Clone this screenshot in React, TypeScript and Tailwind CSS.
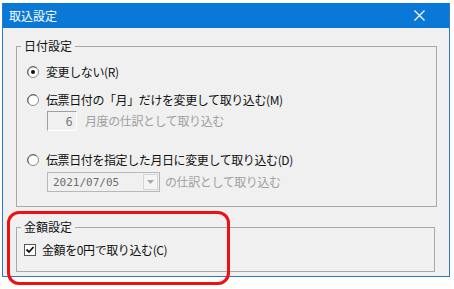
import React from "react";

const font = { fontFamily: '"Noto Sans CJK JP", "Noto Sans", sans-serif' };

function Radio({ checked }: { checked?: boolean }) {
  return (
    <svg width="12" height="12" viewBox="0 0 12 12" className="shrink-0">
      <circle cx="6" cy="6" r="5.5" fill="#ffffff" stroke="#8a8a8a" />
      <path d="M2 9.5 A5 5 0 0 1 2.5 2.5 A5 5 0 0 1 9.5 2" fill="none" stroke="#5a5a5a" strokeWidth="1" />
      {checked && <circle cx="6" cy="6" r="2" fill="#111111" />}
    </svg>
  );
}

export default function App() {
  return (
    <div className="relative w-[454px] h-[289px] bg-white overflow-hidden" style={font}>
      <div className="ml-[2px] mt-[3px] w-[448px] h-[274px] flex flex-col bg-[#f0f0f0] border-x border-b border-[#2b79c8]">
        <div className="h-[25px] bg-[#0a78d7] flex items-center justify-between pl-[6px] pr-[24px] text-white text-[12px] leading-none shrink-0">
          <span>取込設定</span>
          <svg width="11" height="11" viewBox="0 0 11 11">
            <path d="M0.5 0.5 L10.5 10.5 M10.5 0.5 L0.5 10.5" stroke="#ffffff" strokeWidth="1.2" />
          </svg>
        </div>

        <fieldset className="ml-[13px] mt-[10px] w-[421px] border border-[#a8a8a8] px-0 pb-[14px] pt-0 text-[12px] text-[#111]">
          <legend className="ml-[4px] px-[3px] leading-[16px]">日付設定</legend>
          <div className="flex flex-col pl-[10px] pt-[10px] tracking-[-0.4px]">
            <div className="flex items-center gap-[7px] h-[16px]">
              <Radio checked />
              <span className="leading-[16px]">変更しない(R)</span>
            </div>
            <div className="flex items-center gap-[7px] h-[16px] mt-[12px]">
              <Radio />
              <span className="leading-[16px]">伝票日付の「月」だけを変更して取り込む(M)</span>
            </div>
            <div className="flex items-center mt-[3px] ml-[20px] gap-[8px]">
              <div className="w-[30px] h-[20px] border border-t-[#a0a0a0] border-l-[#a0a0a0] border-b-[#ffffff] border-r-[#ffffff] flex items-center justify-end pr-[4px] text-[#6d6d6d] leading-none">
                6
              </div>
              <span className="text-[#a0a0a0] leading-[16px]">月度の仕訳として取り込む</span>
            </div>
            <div className="flex items-center gap-[7px] h-[16px] mt-[21px]">
              <Radio />
              <span className="leading-[16px]">伝票日付を指定した月日に変更して取り込む(D)</span>
            </div>
            <div className="flex items-center mt-[4px] ml-[20px] gap-[5px]">
              <div className="w-[113px] h-[20px] border border-[#b8b8b8] bg-[#f0f0f0] flex items-center">
                <span className="flex-1 pl-[5px] text-[#6d6d6d] leading-none tracking-normal" style={{ fontFamily: '"DejaVu Sans Mono", monospace', fontSize: "11px" }}>2021/07/05</span>
                <div className="w-[15px] h-[16px] mr-[1px] border border-[#d4d4d4] bg-[#f4f4f4] flex items-center justify-center">
                  <svg width="7" height="4" viewBox="0 0 7 4">
                    <path d="M0 0 L7 0 L3.5 4 Z" fill="#a8a8a8" />
                  </svg>
                </div>
              </div>
              <span className="text-[#a0a0a0] leading-[16px]">の仕訳として取り込む</span>
            </div>
          </div>
        </fieldset>

        <fieldset className="ml-[13px] mt-[12px] w-[419px] border border-[#a8a8a8] px-0 pb-[13px] pt-0 text-[12px] text-[#111]">
          <legend className="ml-[4px] px-[3px] leading-[16px]">金額設定</legend>
          <div className="flex items-center gap-[6px] pl-[7px] pt-[7px] h-[23px] tracking-[-0.4px]">
            <svg width="12" height="12" viewBox="0 0 12 12" className="shrink-0">
              <rect x="0.5" y="0.5" width="11" height="11" fill="#ffffff" stroke="#555555" />
              <path d="M2.5 5.5 L5 8 L9.5 3" fill="none" stroke="#111111" strokeWidth="1.8" />
            </svg>
            <span className="leading-[16px]">金額を0円で取り込む(C)</span>
          </div>
        </fieldset>
      </div>

      <div className="absolute left-[7px] top-[211px] w-[223px] h-[74px] rounded-[12px] border-[3px] border-[#ee1111] pointer-events-none" />
    </div>
  );
}
